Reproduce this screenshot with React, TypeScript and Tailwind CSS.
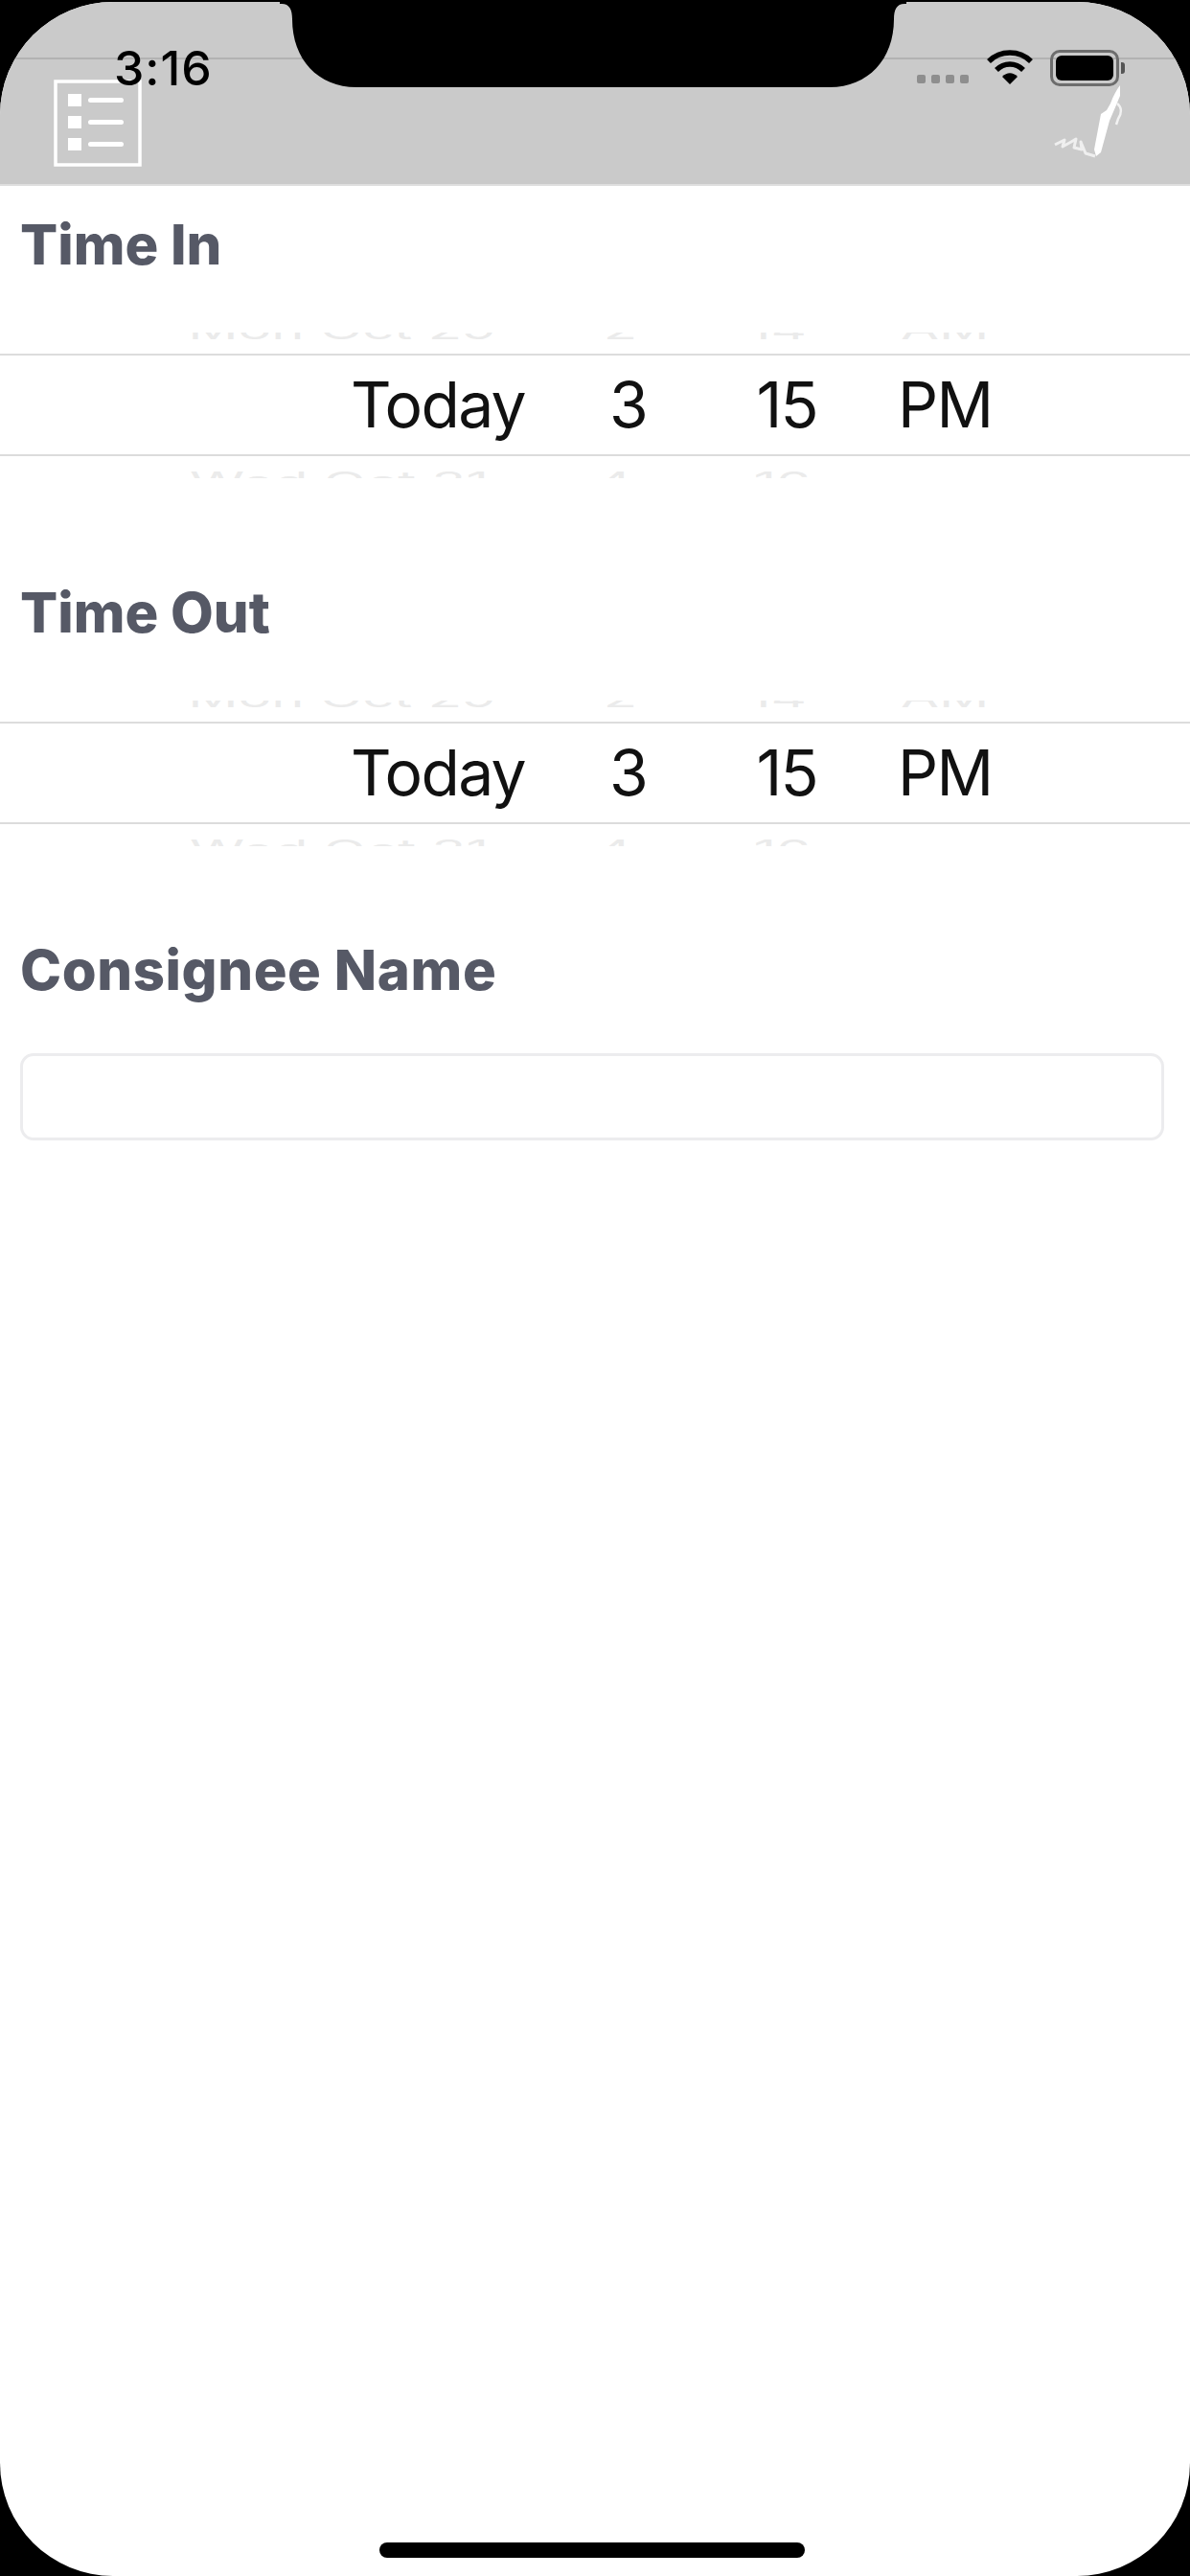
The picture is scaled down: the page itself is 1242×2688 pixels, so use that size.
const sans = "font-['Inter',sans-serif]"

function ListIcon() {
  return (
    <svg width="92" height="92" viewBox="0 0 92 92" fill="none" className="ml-[56px] mt-[81px]">
      <rect x="2" y="2" width="88" height="87" stroke="#fff" strokeWidth="3.5" />
      {[15, 38, 61].map((y) => (
        <g key={y}>
          <rect x="15" y={y} width="14" height="13" fill="#fff" />
          <rect x="36" y={y + 4} width="37" height="5" rx="2.5" fill="#fff" />
        </g>
      ))}
    </svg>
  )
}

function PenIcon() {
  return (
    <svg width="76" height="80" viewBox="0 0 76 80" fill="none" className="mr-[67px] mt-[86px]">
      <path d="M70 1 C66 6 63 12 60 20 L56 27 L50 31 L43 68 L45 75 L50 71 L59 38 L65 24 L70 12 Z" fill="#fff" />
      <path d="M67 20 C72 24 72 30 68 36 L66 42" stroke="#fff" strokeWidth="2.5" opacity="0.75" />
      <path
        d="M2 63 L12 58 L10 65 L19 60 L24 57 L22 66 L30 68 L29 60 L34 72 L44 75"
        stroke="#fff"
        strokeWidth="3"
        strokeLinejoin="round"
        opacity="0.7"
      />
    </svg>
  )
}

function StatusOverlay() {
  return (
    <div className="absolute inset-0 h-[100px] pointer-events-none">
      <div className="absolute left-0 right-0 top-[58px] h-[2px] bg-[#b2b2b2]" />
      {/* notch */}
      <svg width="654" height="92" viewBox="0 0 654 92" className="absolute left-[292px] top-0">
        <path
          d="M0 0 H654 V2 H652 C644 2 641 8 641 18 C641 60 614 89 574 89 H80 C40 89 13 60 13 18 C13 8 10 2 2 2 H0 Z"
          fill="#000"
        />
      </svg>
      <span className={`absolute left-[119px] top-[42px] text-[50px] leading-[54px] font-medium tracking-[1px] text-black ${sans}`}>3:16</span>
      <div className="absolute left-[957px] top-[76px] flex gap-[6px]">
        {[0, 1, 2, 3].map((i) => (
          <span key={i} className="size-[9px] rounded-[2px] bg-[#8e8e8e]" />
        ))}
      </div>
      <svg width="50" height="38" viewBox="0 0 50 38" fill="none" className="absolute left-[1029px] top-[49px]">
        <path d="M3 13 C15 1 35 1 47 13" stroke="#000" strokeWidth="5.5" />
        <path d="M11 22 C19 14 31 14 39 22" stroke="#000" strokeWidth="5.5" />
        <path d="M17 29 L25 37 L33 29 C28 24 22 24 17 29 Z" fill="#000" />
      </svg>
      <div className="absolute left-[1096px] top-[50px] flex h-[38px] w-[72px] rounded-[10px] border-[3px] border-[#6d6d6d] p-[3px]">
        <div className="flex-1 rounded-[6px] bg-black" />
      </div>
      <div className="absolute left-[1170px] top-[63px] h-[12px] w-[4px] rounded-r-[3px] bg-[#555]" />
    </div>
  )
}

function TimePicker() {
  return (
    <div className={`flex flex-col ${sans}`}>
      {/* only the bottom sliver of the row above shows */}
      <div className="flex h-[9px] items-end overflow-hidden">
        <div className="flex h-[50px] w-full origin-bottom scale-y-[0.5] items-center text-[58px] text-[#ebebeb]">
          <span className="w-[518px] text-right">Mon Oct 29</span>
          <span className="w-[147px] text-right">2</span>
          <span className="w-[177px] text-right">14</span>
          <span className="ml-[98px]">AM</span>
        </div>
      </div>
      <div className="mt-[13px] flex h-[107px] items-center border-y-2 border-[#dcdcdc] text-[66px] tracking-[-1.7px] text-[#111]">
        <span className="w-[548px] text-right">Today</span>
        <span className="w-[127px] text-right">3</span>
        <span className="w-[178px] text-right">15</span>
        <span className="ml-[84px]">PM</span>
      </div>
      <div className="mt-[14px] flex h-[9px] items-start overflow-hidden">
        <div className="flex h-[50px] w-full origin-top scale-y-[0.5] items-center text-[58px] text-[#ebebeb]">
          <span className="w-[510px] text-right">Wed Oct 31</span>
          <span className="w-[150px] text-right">4</span>
          <span className="w-[186px] text-right">16</span>
        </div>
      </div>
    </div>
  )
}

function Label({ children, className }: { children: string; className: string }) {
  return <h2 className={`pl-[21px] text-[58px] font-extrabold leading-[70px] text-[#565966] ${sans} ${className}`}>{children}</h2>
}

export default function App() {
  return (
    <div className="h-[2688px] w-[1242px] overflow-hidden bg-black pt-[2px]">
      <div className="relative h-[2686px] overflow-hidden rounded-[118px] bg-white">
        <header className="flex h-[192px] items-start justify-between border-b-2 border-[#dedede] bg-[#cacaca]">
          <ListIcon />
          <PenIcon />
        </header>
        <StatusOverlay />

        <Label className="mt-[26px]">Time In</Label>
        <div className="mt-[57px]">
          <TimePicker />
        </div>

        <Label className="mt-[105px]">Time Out</Label>
        <div className="mt-[57px]">
          <TimePicker />
        </div>

        <Label className="mt-[94px] tracking-[0.6px]">Consignee Name</Label>
        <div className="ml-[21px] mr-[27px] mt-[52px] h-[91px] rounded-[14px] border-[3px] border-[#ececee]" />

        <div className="absolute bottom-[19px] left-[396px] h-[16px] w-[444px] rounded-full bg-black" />
      </div>
    </div>
  )
}
